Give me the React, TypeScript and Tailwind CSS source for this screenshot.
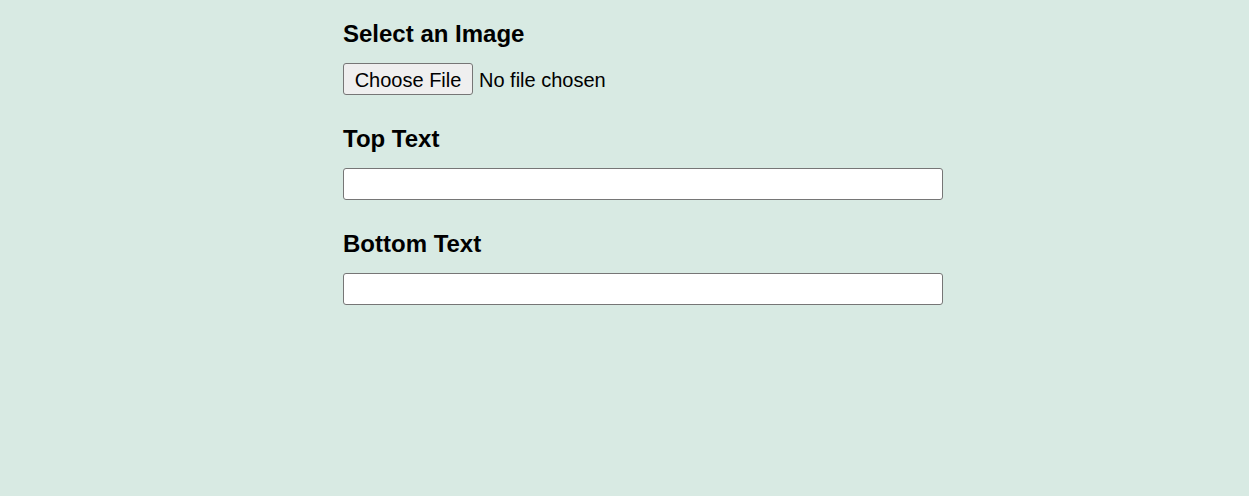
export default function App() {
  return (
    <div className="min-h-screen bg-[#d8eae3] font-['Liberation_Sans',Arial,sans-serif] text-black">
      <div className="ml-[343px] flex w-[600px] flex-col gap-[30px] pt-[20px]">
        <div className="flex flex-col gap-[15px]">
          <h2 className="text-[24px] font-bold leading-[28px]">Select an Image</h2>
          <input
            type="file"
            accept="image/*"
            className="h-[32px] text-[20px] leading-[32px] file:mr-[6px] file:h-[32px] file:w-[130px] file:rounded-[3px] file:border file:border-[#767676] file:bg-[#efefef] file:text-[20px] file:text-black"
          />
        </div>
        <div className="flex flex-col gap-[15px]">
          <h2 className="text-[24px] font-bold leading-[28px]">Top Text</h2>
          <input
            type="text"
            className="h-[32px] w-[600px] rounded-[3px] border border-[#767676] bg-white px-[4px] text-[20px]"
          />
        </div>
        <div className="flex flex-col gap-[15px]">
          <h2 className="text-[24px] font-bold leading-[28px]">Bottom Text</h2>
          <input
            type="text"
            className="h-[32px] w-[600px] rounded-[3px] border border-[#767676] bg-white px-[4px] text-[20px]"
          />
        </div>
      </div>
    </div>
  );
}
